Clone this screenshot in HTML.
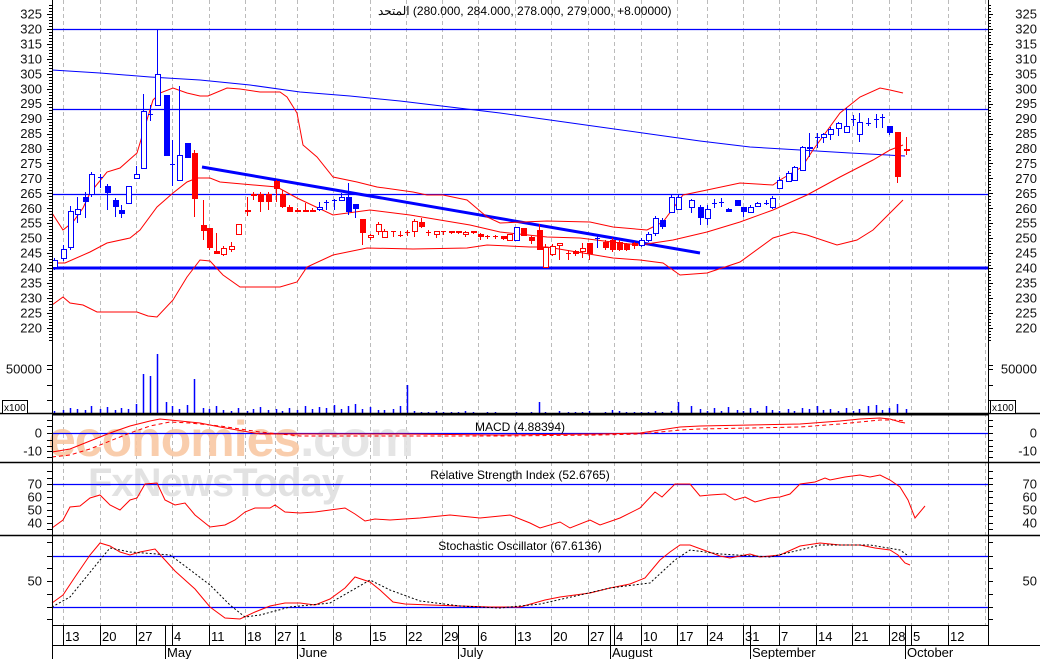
<!DOCTYPE html>
<html><head><meta charset="utf-8"><style>
html,body{margin:0;padding:0;background:#fff;}
svg{display:block;font-family:"Liberation Sans","Noto Sans CJK SC",sans-serif;}
</style></head><body>
<svg id="s" width="1040" height="659" viewBox="0 0 1040 659" xmlns="http://www.w3.org/2000/svg">
<rect width="1040" height="659" fill="#fff"/>
<g id="grid" stroke="#bbb" stroke-width="1" stroke-dasharray="4,3"></g>
<text x="48" y="456" font-size="50" font-weight="bold" fill="#f9c8a4" opacity="0.9" letter-spacing="-1">economies<tspan fill="#e3e3e3">.com</tspan></text>
<text x="88" y="496" font-size="40" font-weight="bold" fill="#e2e2e2" letter-spacing="-1">FxNewsToday</text>
<g id="lines"></g>
<g id="cand"></g>
<g id="ax"></g>
</svg>
<script>
const NS="http://www.w3.org/2000/svg";
function el(p,t,a,txt){const e=document.createElementNS(NS,t);for(const k in a)e.setAttribute(k,a[k]);if(txt!==undefined)e.textContent=txt;document.getElementById(p).appendChild(e);return e;}
const gx=[63,100,136,172,209,245,275,297,333,370,406,442,478,515,551,588,614,641,677,707,743,779,816,852,889,911,948,985];
gx.forEach(x=>el('grid','line',{x1:x+.5,y1:0,x2:x+.5,y2:625}));
function pl(pts,a){el('lines','polyline',Object.assign({points:pts.map(p=>p.join(',')).join(' '),fill:'none'},a));}
function hl(y,w,x1,x2){el('lines','line',{x1:x1||52,x2:x2||988,y1:y,y2:y,stroke:'#0000ff','stroke-width':w||1.2});}
hl(29.5);hl(109.5);hl(194.5);hl(268,3);
pl([[52,70],[100,73],[150,77],[200,80],[250,85],[300,92],[350,96],[400,101],[450,107],[500,113],[550,120],[600,127],[650,134],[700,141],[750,147],[800,150],[850,153],[905,156]],{stroke:'#0000ff'});
el('lines','line',{x1:202,y1:167,x2:700,y2:253,stroke:'#0000ff','stroke-width':3});
const R={stroke:'#ff0000','stroke-width':1};
pl([[52,213],[63,230],[73,222],[83,208],[90,193],[107,172],[120,168],[137,153],[143,133],[153,100],[160,93],[173,88],[187,93],[200,96],[208,96],[227,88],[240,89],[260,92],[280,92],[287,97],[297,113],[303,145],[317,157],[333,177],[357,182],[377,187],[413,192],[427,195],[443,195],[467,200],[487,217],[500,223],[547,221],[590,222],[613,227],[647,230],[663,222],[683,195],[707,190],[740,183],[773,185],[780,180],[802,167],[813,150],[840,113],[860,97],[880,88],[890,90],[903,93]],R);
pl([[52,263],[65,263],[90,252],[107,243],[130,238],[140,230],[157,207],[173,193],[187,182],[197,178],[210,178],[220,182],[277,187],[297,198],[333,215],[370,210],[410,215],[470,225],[500,232],[547,237],[580,238],[620,243],[640,245],[673,240],[707,232],[740,222],[773,210],[807,195],[840,177],[873,160],[890,150],[903,145]],R);
pl([[52,305],[63,297],[70,303],[83,305],[97,312],[137,312],[148,316],[157,317],[173,300],[187,277],[200,260],[210,261],[223,275],[240,287],[280,287],[297,282],[307,267],[333,255],[367,248],[413,249],[467,248],[487,245],[530,247],[547,247],[613,258],[640,260],[663,263],[680,275],[707,273],[740,262],[773,238],[793,232],[807,235],[837,245],[857,240],[873,230],[890,213],[903,200]],R);
const C=[[54,260,267,258,270,'B'],[63,249,258,245,261,'B'],[70,211,247,206,250,'B'],[77,209,214,197,223,'B'],[85,197,202,192,218,'b'],[91,174,194,172,197,'B'],[100,177,177,174,188,'x'],[107,186,193,184,210,'b'],[115,200,207,198,217,'b'],[121,210,214,205,218,'b'],[128,186,203,186,203,'B'],[136,174,178,166,179,'B'],[143,111,168,94,168,'B'],[150,114,114,105,121,'x'],[157,74,105,29,105,'B'],[166,95,156,95,156,'b'],[172,164,164,140,186,'x'],[179,155,180,86,180,'B'],[187,143,158,143,158,'b'],[194,153,199,150,217,'R'],
[203,225,231,200,240,'R'],[209,228,248,228,250,'R'],[216,251,254,233,254,'R'],[223,248,254,246,256,'r'],[231,246,249,242,252,'r'],[238,224,234,224,234,'r'],[247,210,212,197,216,'R'],[253,194,196,192,200,'R'],[260,194,202,192,212,'R'],[268,194,202,192,210,'R'],[276,181,189,180,202,'R'],[282,194,207,190,208,'R'],[289,207,212,205,212,'R'],[297,210,212,208,212,'R'],[305,210,212,203,212,'R'],[312,210,212,208,212,'R'],[319,207,209,202,211,'B'],[326,202,202,200,210,'x'],[334,200,200,199,210,'x'],[341,197,200,193,200,'B'],[348,197,212,183,215,'b'],[355,204,209,204,218,'b'],
[362,219,233,219,245,'R'],[370,235,237,234,240,'r'],[378,224,231,222,235,'r'],[384,231,237,229,238,'r'],[393,231,231,231,237,'x'],[400,235,235,231,237,'x'],[407,232,232,230,236,'x'],[414,221,231,219,237,'r'],[421,222,227,218,228,'R'],[428,232,232,230,236,'x'],[436,231,234,231,238,'r'],[443,231,231,231,235,'x'],[451,231,233,231,234,'R'],[458,231,233,231,234,'R'],[465,232,234,231,237,'r'],[473,231,233,231,234,'R'],[480,234,237,233,240,'R'],[487,236,236,235,239,'x'],[495,236,236,235,239,'x'],[503,236,239,236,240,'R'],[509,234,240,234,240,'r'],[516,227,240,227,240,'B'],[523,228,236,228,236,'R'],[531,237,241,236,244,'R'],[539,230,250,224,250,'R'],[545,247,267,244,267,'r'],[552,246,254,244,256,'r'],[559,243,245,243,260,'r'],[568,253,253,250,260,'x'],[575,251,254,250,256,'R'],[582,248,251,243,258,'r'],[589,243,254,243,260,'R'],[597,238,238,236,248,'x'],[605,242,248,240,250,'R'],[612,240,250,238,252,'R'],[619,242,250,240,251,'R'],[626,244,250,243,251,'R'],[634,243,246,242,249,'R'],[641,240,245,238,247,'B'],[648,234,240,232,242,'B'],[655,218,233,216,236,'B'],[662,220,227,218,229,'b'],[671,197,212,195,213,'B'],[678,197,209,195,210,'B'],[691,200,207,199,213,'B'],[700,207,218,205,225,'b'],[707,209,218,205,225,'B'],[714,203,203,199,208,'x'],[721,202,202,198,207,'x'],[728,209,212,208,212,'b'],[737,200,206,200,206,'b'],[743,207,212,207,217,'b'],[750,207,212,205,213,'B'],[757,203,206,202,207,'B'],[766,203,203,200,205,'x'],[772,198,207,196,209,'B'],[779,180,188,177,189,'B'],[788,173,181,171,182,'B'],[794,167,180,166,181,'B'],[802,147,170,146,170,'B'],[809,147,149,133,157,'b'],[817,137,137,133,148,'x'],[823,134,137,133,143,'B'],[830,129,134,127,140,'B'],[838,123,128,122,136,'B'],[846,126,132,108,132,'B'],[853,119,119,115,126,'x'],[859,122,134,113,142,'B'],[868,123,123,118,126,'x'],[876,119,119,114,128,'x'],[882,117,117,114,128,'x'],[889,126,133,126,135,'b'],[897,132,177,132,183,'R'],[906,149,151,137,155,'R']];
const vol=[3,4,6,5,4,8,5,7,4,6,5,10,40,38,60,12,8,5,9,35,6,5,8,4,3,6,3,5,7,4,5,3,6,4,8,5,7,6,9,5,8,10,5,7,4,4,5,8,29,3,2,2,3,2,2,2,3,2,1,2,2,1,1,2,1,2,12,2,1,3,2,2,2,3,1,2,4,3,2,2,2,2,3,2,3,12,8,5,3,6,3,7,4,3,6,3,8,4,3,5,3,6,5,8,4,5,3,6,3,5,8,9,4,6,10,5,8,14,6];
C.forEach((c,i)=>{let [x,t,b,wt,wb,ty]=c;const blue=(ty==='B'||ty==='b'||(ty==='x'&&(x<340||x>590)));const col=blue?'#0000ff':'#ff0000';
el('cand','line',{x1:x+.5,x2:x+.5,y1:wt,y2:wb,stroke:col});
if(ty==='x'){el('cand','line',{x1:x-2,x2:x+3,y1:t+.5,y2:t+.5,stroke:col});}
else if(ty==='b'||ty==='R'){el('cand','rect',{x:x-2,y:t,width:6,height:Math.max(2,b-t),fill:col});}
else{el('cand','rect',{x:x-2+.5,y:t+.5,width:5,height:Math.max(2,b-t),fill:'#fff',stroke:col});}
const h=vol[i]||3;el('cand','line',{x1:x+.5,x2:x+.5,y1:414-h,y2:414,stroke:'#0000ff','stroke-width':1.5});
});
hl(433.5);
pl([[52,452],[70,449],[90,441],[110,433],[130,426],[150,421],[160,419],[180,421],[200,423],[220,427],[260,434],[300,434],[400,434],[500,435],[600,434],[640,433],[660,430],[680,427],[700,426],[800,424],[840,421],[860,419],[880,418],[890,419],[900,422],[905,423]],R);
pl([[52,457],[70,455],[90,449],[110,441],[130,433],[150,426],[170,422],[190,423],[220,426],[260,432],[300,436],[400,436],[500,436],[600,435],[640,434],[660,432],[680,430],[700,429],[800,427],[840,424],[860,422],[880,420],[895,420],[905,421]],{stroke:'#ff0000','stroke-dasharray':'4,3',fill:'none'});
hl(484.5);
pl([[52,528],[63,520],[70,507],[80,506],[90,498],[100,495],[110,505],[120,510],[130,500],[137,498],[145,484],[157,483],[165,500],[175,505],[185,503],[195,515],[210,527],[225,525],[235,520],[245,512],[255,508],[270,508],[275,505],[285,512],[300,513],[315,512],[330,510],[345,508],[355,514],[365,521],[375,519],[390,520],[420,518],[450,515],[480,518],[510,515],[530,523],[540,528],[560,522],[570,528],[590,520],[600,525],[620,518],[640,508],[655,492],[662,497],[675,484],[690,484],[700,496],[710,495],[725,494],[735,500],[745,497],[755,502],[770,498],[780,497],[790,494],[800,484],[815,482],[825,478],[830,480],[845,477],[860,475],[870,477],[880,475],[890,480],[900,487],[908,500],[915,518],[925,506]],R);
hl(556.5);hl(607.5);
pl([[52,603],[63,595],[75,577],[90,555],[100,543],[110,546],[120,552],[130,555],[140,552],[155,549],[165,560],[175,571],[195,589],[210,607],[225,618],[240,619],[255,612],[270,606],[285,603],[300,603],[315,605],[330,599],[345,588],[355,577],[370,582],[380,590],[393,602],[405,604],[430,605],[460,606],[490,607],[520,607],[545,600],[560,597],[590,593],[610,588],[630,584],[645,578],[660,560],[670,552],[680,545],[690,545],[720,556],[730,558],[750,554],[760,557],[780,555],[800,546],[820,543],[840,545],[860,545],[875,548],[890,550],[898,555],[905,563],[910,565]],R);
pl([[52,607],[70,597],[100,560],[110,548],[130,552],[170,555],[185,566],[210,585],[230,605],[245,617],[260,615],[290,607],[330,603],[370,580],[390,590],[420,601],[460,606],[500,608],[540,604],[580,595],[610,588],[650,583],[675,560],[690,550],[720,554],[770,557],[800,550],[820,545],[870,545],[900,550],[907,555]],{stroke:'#000','stroke-dasharray':'2,2',fill:'none'});
function ax(t,a){return el('ax',t,a);}
[413.5,462.5,535.5].forEach(y=>ax('line',{x1:0,x2:1040,y1:y,y2:y,stroke:'#000','stroke-width':1.5}));
ax('line',{x1:52,x2:988,y1:414.5,y2:414.5,stroke:'#000','stroke-width':2});
ax('line',{x1:52,x2:988,y1:625.5,y2:625.5,stroke:'#000'});
ax('line',{x1:52,x2:1040,y1:645.5,y2:645.5,stroke:'#000'});
ax('line',{x1:52.5,x2:52.5,y1:0,y2:659,stroke:'#000'});
ax('line',{x1:988.5,x2:988.5,y1:0,y2:645,stroke:'#000'});
function py(p){return 29+(320-p)*2.9875;}
for(let p=215;p<=328;p++){const y=py(p);if(y<1||y>340)continue;const L=p%5==0?5:3;
ax('line',{x1:52-L,x2:52,y1:Math.round(y)+.5,y2:Math.round(y)+.5,stroke:'#000'});ax('line',{x1:988,x2:988+L,y1:Math.round(y)+.5,y2:Math.round(y)+.5,stroke:'#000'});
if(p%5==0&&p>=220&&p<=325){ax('text',{x:42,y:y+4.5,'text-anchor':'end','font-size':13,fill:'#111'}).textContent=p;ax('text',{x:1037,y:y+4.5,'text-anchor':'end','font-size':13,fill:'#111'}).textContent=p;}}
function lab(y,t){ax('text',{x:42,y:y+4.5,'text-anchor':'end','font-size':13,fill:'#111'}).textContent=t;ax('text',{x:1037,y:y+4.5,'text-anchor':'end','font-size':13,fill:'#111'}).textContent=t;}
lab(369,'50000');lab(433,'0');lab(451,'-10');lab(484,'70');lab(497,'60');lab(510,'50');lab(523,'40');lab(581,'50');
[365,369,385,400].forEach(y=>{ax('line',{x1:47,x2:52,y1:y+.5,y2:y+.5,stroke:'#000'});ax('line',{x1:988,x2:993,y1:y+.5,y2:y+.5,stroke:'#000'});});
[420,426,433,440,446,451,457,471,478,484,491,497,503,510,516,523,529,542,556,568,581,594,607,619].forEach(y=>{ax('line',{x1:47,x2:52,y1:y+.5,y2:y+.5,stroke:'#000'});ax('line',{x1:988,x2:993,y1:y+.5,y2:y+.5,stroke:'#000'});});
ax('rect',{x:2.5,y:400.5,width:25,height:13,fill:'#fff',stroke:'#000'});ax('text',{x:4,y:411,'font-size':10}).textContent='x100';
ax('rect',{x:990.5,y:400.5,width:25,height:13,fill:'#fff',stroke:'#000'});ax('text',{x:992,y:411,'font-size':10}).textContent='x100';
ax('text',{x:520,y:431,'text-anchor':'middle','font-size':12}).textContent='MACD (4.88394)';
ax('text',{x:520,y:479,'text-anchor':'middle','font-size':12}).textContent='Relative Strength Index (52.6765)';
ax('text',{x:520,y:550,'text-anchor':'middle','font-size':12}).textContent='Stochastic Oscillator (67.6136)';
const tt=ax('text',{x:378,y:15,'font-size':12,direction:'ltr','unicode-bidi':'embed'});
tt.textContent='\u202Aالمتحد\u200E (280.000, 284.000, 278.000, 279.000, +8.00000)\u202C';
const d=[[63,'13'],[100,'20'],[136,'27'],[172,'4'],[209,'11'],[245,'18'],[275,'27'],[297,'1'],[333,'8'],[370,'15'],[406,'22'],[442,'29'],[478,'6'],[515,'13'],[551,'20'],[588,'27'],[614,'4'],[641,'10'],[677,'17'],[707,'24'],[743,'31'],[779,'7'],[816,'14'],[852,'21'],[889,'28'],[911,'5'],[948,'12']];
d.forEach(([x,t])=>{ax('line',{x1:x+.5,x2:x+.5,y1:625,y2:645,stroke:'#000'});ax('text',{x:x+2,y:641,'font-size':13}).textContent=t;});
[[165,'May'],[297,'June'],[458,'July'],[610,'August'],[750,'September'],[905,'October']].forEach(([x,t])=>{ax('line',{x1:x+.5,x2:x+.5,y1:625,y2:659,stroke:'#000'});ax('text',{x:x+2,y:657,'font-size':13}).textContent=t;});
</script>
</body></html>
